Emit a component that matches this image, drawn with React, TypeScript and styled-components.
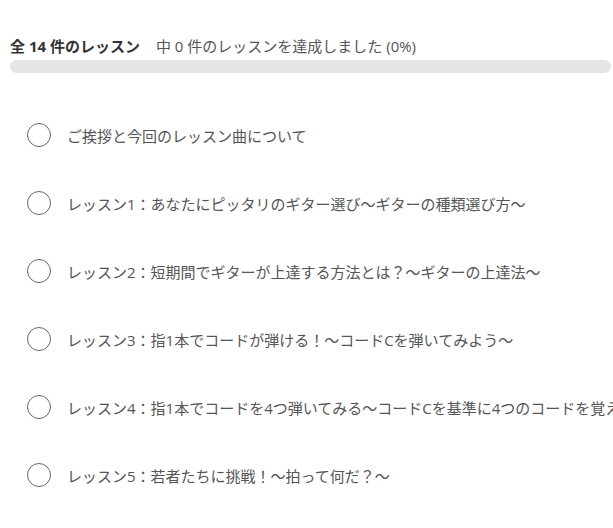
import React from "react";
import styled, { createGlobalStyle } from "styled-components";

const lessons = [
  "ご挨拶と今回のレッスン曲について",
  "レッスン1：あなたにピッタリのギター選び～ギターの種類選び方～",
  "レッスン2：短期間でギターが上達する方法とは？～ギターの上達法～",
  "レッスン3：指1本でコードが弾ける！～コードCを弾いてみよう～",
  "レッスン4：指1本でコードを4つ弾いてみる～コードCを基準に4つのコードを覚えよう～",
  "レッスン5：若者たちに挑戦！～拍って何だ？～",
];

const GlobalStyle = createGlobalStyle`
  body {
    margin: 0;
    background: #ffffff;
    font-family: "Open Sans", "Noto Sans CJK JP", sans-serif;
    overflow: hidden;
  }
`;

const Wrapper = styled.div`
  padding: 36px 0 0 10px;
  width: 640px;
`;

const Summary = styled.div`
  display: flex;
  align-items: baseline;
  gap: 16px;
  font-size: 15px;
  line-height: 21px;
  white-space: nowrap;
`;

const Total = styled.span`
  font-weight: 700;
  color: #333333;
`;

const Done = styled.span`
  color: #555555;
`;

const ProgressBar = styled.div`
  margin-top: 3px;
  width: 601px;
  height: 13px;
  border-radius: 7px;
  background: #e4e4e4;
`;

const List = styled.ul`
  list-style: none;
  margin: 28px 0 0;
  padding: 0;
`;

const Row = styled.li`
  display: flex;
  align-items: center;
  gap: 16px;
  height: 68px;
  padding-left: 17px;
  white-space: nowrap;
`;

const Check = styled.span`
  flex: none;
  box-sizing: border-box;
  width: 24px;
  height: 24px;
  border: 1.5px solid #666666;
  border-radius: 50%;
`;

const Title = styled.span`
  font-size: 15px;
  color: #555555;
`;

export default function App() {
  return (
    <Wrapper>
      <GlobalStyle />
      <Summary>
        <Total>全 14 件のレッスン</Total>
        <Done>中 0 件のレッスンを達成しました (0%)</Done>
      </Summary>
      <ProgressBar />
      <List>
        {lessons.map((title) => (
          <Row key={title}>
            <Check />
            <Title>{title}</Title>
          </Row>
        ))}
      </List>
    </Wrapper>
  );
}
